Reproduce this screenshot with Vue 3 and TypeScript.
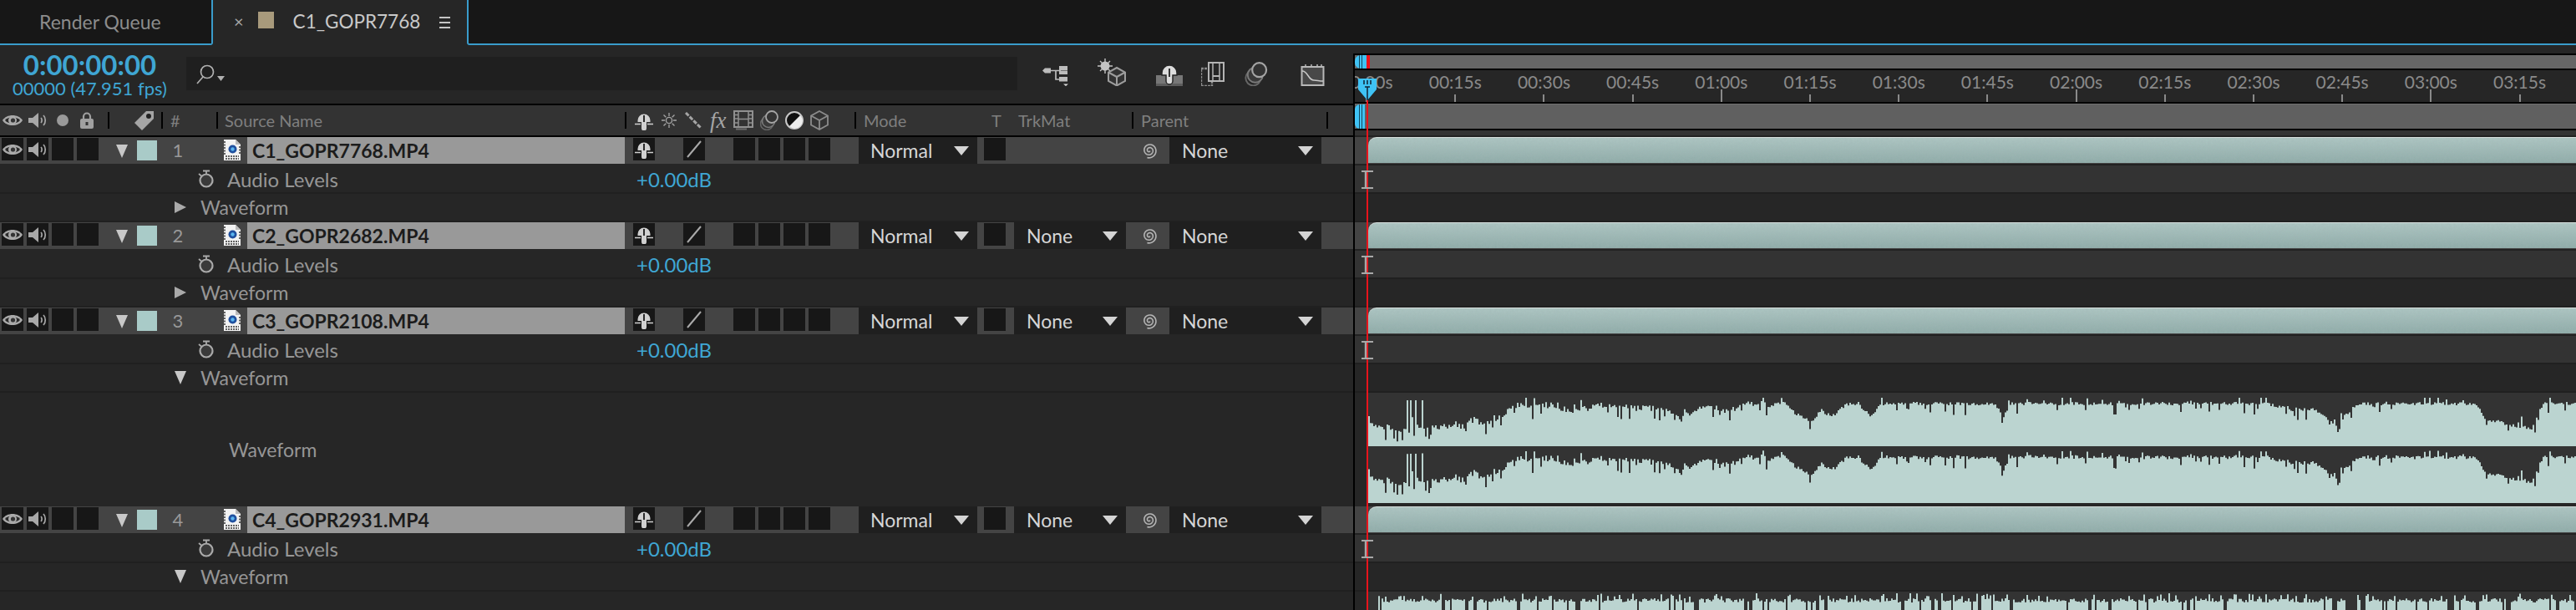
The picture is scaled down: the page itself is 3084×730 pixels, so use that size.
<template>
  <div class="app">
    <!-- icon sprite -->
    <svg class="sprite" aria-hidden="true">
      <symbol id="eye" viewBox="0 0 24 18">
        <path d="M0 9C5 1 19 1 24 9C19 17 5 17 0 9Z" fill="#aaa" />
        <path d="M3 9C7 4 17 4 21 9C17 14 7 14 3 9Z" fill="#2a2a2a" />
        <circle cx="12" cy="9" r="5" fill="#aaa" />
        <circle cx="12.5" cy="9" r="2.6" fill="#333" />
      </symbol>
      <symbol id="speaker" viewBox="0 0 23 20">
        <path d="M0 7H5L12 1V19L5 13H0Z" fill="#a8a8a8" />
        <path d="M15 7C16.5 8.5 16.5 11.5 15 13M18 4C21 7 21 13 18 16" fill="none" stroke="#a8a8a8" stroke-width="1.7" />
      </symbol>
      <symbol id="lock" viewBox="0 0 16 20">
        <path d="M4 8V5.5a4 4 0 0 1 8 0V8" fill="none" stroke="#a0a0a0" stroke-width="2.2" />
        <rect x="0" y="8" width="16" height="12" rx="2" fill="#a0a0a0" />
        <rect x="6.5" y="12" width="3" height="4" fill="#333" />
      </symbol>
      <symbol id="tag" viewBox="0 0 25 25">
        <path d="M1 15L15 1H24V10L10 24Z" fill="#a5a5a5" />
        <circle cx="18" cy="7" r="3" fill="#222" />
      </symbol>
      <symbol id="mask" viewBox="0 0 22 23">
        <path d="M3.5 11a7.5 7.5 0 0 1 15 0V13H14V20.5a3 3 0 0 1-6 0V13H3.5Z" fill="#d0d0d0" />
        <rect x="10" y="5" width="2" height="8" fill="#2a2a2a" />
        <path d="M0 15.5H7M15 15.5H22" stroke="#d0d0d0" stroke-width="1.6" />
      </symbol>
      <symbol id="sun" viewBox="0 0 18 18">
        <circle cx="9" cy="9" r="3.6" fill="none" stroke="#a5a5a5" stroke-width="1.4" />
        <path d="M9 0V4M9 14V18M0 9H4M14 9H18M2.5 2.5L5.3 5.3M12.7 12.7L15.5 15.5M15.5 2.5L12.7 5.3M5.3 12.7L2.5 15.5" stroke="#a5a5a5" stroke-width="1.3" />
      </symbol>
      <symbol id="dashes" viewBox="0 0 20 20">
        <path d="M1 1L19 19" stroke="#a5a5a5" stroke-width="3" stroke-dasharray="5 1.6" />
      </symbol>
      <symbol id="slash" viewBox="0 0 26 27">
        <path d="M5 23L21 4" stroke="#aaa" stroke-width="2" />
      </symbol>
      <symbol id="film" viewBox="0 0 24 24">
        <rect x="1" y="1" width="22" height="19" fill="none" stroke="#909090" stroke-width="2" />
        <path d="M6 1V20M18 1V20M1 5.5H6M1 10H6M1 15H6M18 5.5H23M18 10H23M18 15H23M6 10.5H18" stroke="#909090" stroke-width="1.5" />
        <path d="M3 22.5H16" stroke="#6d6d6d" stroke-width="2" />
      </symbol>
      <symbol id="blur" viewBox="0 0 22 24">
        <ellipse cx="8" cy="16" rx="7.5" ry="7.5" fill="none" stroke="#666" stroke-width="1.6" />
        <ellipse cx="10" cy="13" rx="7.5" ry="7.5" fill="#3a3a3a" stroke="#7a7a7a" stroke-width="1.6" />
        <ellipse cx="14" cy="8" rx="7" ry="7" fill="#333" stroke="#a5a5a5" stroke-width="1.8" />
      </symbol>
      <symbol id="adjust" viewBox="0 0 22 22">
        <circle cx="11" cy="11" r="10" fill="#111" stroke="#c8c8c8" stroke-width="2" />
        <path d="M18 5A9 9 0 0 1 5 18Z" fill="#eee" />
      </symbol>
      <symbol id="cube" viewBox="0 0 22 24">
        <path d="M11 1L21 6.5V17.5L11 23L1 17.5V6.5Z M1 6.5L11 12L21 6.5M11 12V23" fill="none" stroke="#8c8c8c" stroke-width="1.8" />
      </symbol>
      <symbol id="watch" viewBox="0 0 20 22">
        <circle cx="10" cy="13" r="7.5" fill="#3a3a3a" stroke="#aaa" stroke-width="2.2" />
        <path d="M6 1.5H14M10 2V5M1 5L4 7.5" stroke="#aaa" stroke-width="1.8" />
      </symbol>
      <symbol id="spiral" viewBox="0 0 20 20">
        <path :d="spiralPath" fill="none" stroke="#b4b4b4" stroke-width="1.6" />
      </symbol>
      <symbol id="file" viewBox="0 0 20 25">
        <path d="M0 0H14L20 6V25H0Z" fill="#f2f2f2" />
        <path d="M14 0V6H20" fill="#bbb" />
        <circle cx="10.5" cy="11.5" r="5" fill="#1f4f9e" />
        <circle cx="10.5" cy="11.5" r="2.2" fill="#59b4ee" />
        <path d="M2 20H18M2 23H18" stroke="#333" stroke-width="1.5" stroke-dasharray="2 1" />
        <path d="M1 2V18M19 8V18" stroke="#333" stroke-width="1.5" stroke-dasharray="2 1.5" />
      </symbol>
      <symbol id="search" viewBox="0 0 36 24">
        <circle cx="14" cy="9" r="7.5" fill="none" stroke="#b0b0b0" stroke-width="1.7" />
        <path d="M9 15L2 23" stroke="#b0b0b0" stroke-width="1.7" />
        <path d="M26 14H35L30.5 20Z" fill="#b0b0b0" />
      </symbol>
      <symbol id="flow" viewBox="0 0 32 25">
        <path d="M8 6.5H22M16 6.5V17H22" fill="none" stroke="#bcbcbc" stroke-width="1.7" />
        <path d="M0 6.5L3 3.5H10V9.5H3Z" fill="#bcbcbc" />
        <rect x="20" y="1" width="10" height="5.5" fill="#bcbcbc" />
        <rect x="20" y="7" width="10" height="4" fill="#bcbcbc" />
        <rect x="20" y="14" width="10" height="5.5" fill="#bcbcbc" />
        <path d="M25 22.5H31L28 25Z" fill="#ddd" />
      </symbol>
      <symbol id="suncube" viewBox="0 0 34 33">
        <circle cx="9" cy="9" r="5.5" fill="#c4c4c4" />
        <path d="M9 0V18M0 9H18M3 3L15 15M15 3L3 15" stroke="#c4c4c4" stroke-width="1.4" />
        <path d="M23 11L33 16.5V27L23 32.5L13 27V16.5Z" fill="#333" />
        <path d="M23 11L33 16.5V27L23 32.5L13 27V16.5Z M13 16.5L23 22L33 16.5M23 22V32.5" fill="none" stroke="#9d9d9d" stroke-width="2" />
      </symbol>
      <symbol id="draft" viewBox="0 0 32 26">
        <rect x="0" y="13" width="32" height="13" fill="#777" />
        <path d="M0 23H32V26H0Z" fill="#5d5d5d" />
        <path d="M7 10a9 9 0 0 1 18 0V13H20V20a4 4 0 0 1-8 0V13H7Z" fill="#dcdcdc" stroke="#262626" stroke-width="1.5" />
        <rect x="15" y="5" width="2" height="10" fill="#333" />
      </symbol>
      <symbol id="frames" viewBox="0 0 28 29">
        <rect x="0" y="8" width="13" height="21" fill="none" stroke="#8a8a8a" stroke-width="2.4" stroke-dasharray="3 1" />
        <rect x="9" y="1" width="18" height="22" fill="#262626" stroke="#b4b4b4" stroke-width="2" />
        <path d="M14 1V23M22 1V23" stroke="#b4b4b4" stroke-width="1.5" />
        <path d="M14 17H22" stroke="#b4b4b4" stroke-width="2" />
      </symbol>
      <symbol id="graph" viewBox="0 0 29 27">
        <rect x="1.5" y="4" width="26" height="22" fill="#484848" stroke="#b8b8b8" stroke-width="2" />
        <path d="M2 9C9 9 9 20 16 20C20 20 22 21 27 21" fill="none" stroke="#c8c8c8" stroke-width="1.5" />
        <path d="M6 1V4M13 1V4M20 1V4M25 1V4" stroke="#b8b8b8" stroke-width="1.5" />
      </symbol>
      <symbol id="down" viewBox="0 0 14 16">
        <path d="M0 0H14L7 16Z" fill="#c8c8c8" />
      </symbol>
      <symbol id="right" viewBox="0 0 14 14">
        <path d="M0 0L14 7L0 14Z" fill="#aaa" />
      </symbol>
      <symbol id="menu-arrow" viewBox="0 0 18 11">
        <path d="M0 0H18L9 11Z" fill="#d4d4d4" />
      </symbol>
    </svg>

    <header class="tabs">
      <div class="tab-off">Render Queue</div>
      <div class="tab-on">
        <span class="tab-x">×</span>
        <span class="tab-swatch"></span>
        <span class="tab-title">C1_GOPR7768</span>
        <span class="tab-menu"><i></i><i></i><i></i></span>
      </div>
      <div class="tab-rest"></div>
    </header>

    <div class="main">
      <section class="left">
        <div class="toolbar">
          <div class="clock">
            <div class="timecode">0:00:00:00</div>
            <div class="fps">00000 (47.951 fps)</div>
          </div>
          <div class="search">
            <svg class="search-icon"><use href="#search" /></svg>
          </div>
          <div class="tools">
            <svg class="t-flow"><use href="#flow" /></svg>
            <svg class="t-sun"><use href="#suncube" /></svg>
            <svg class="t-draft"><use href="#draft" /></svg>
            <svg class="t-tall"><use href="#frames" /></svg>
            <svg class="t-tall"><use href="#blur" /></svg>
            <svg class="t-graph"><use href="#graph" /></svg>
          </div>
        </div>

        <div class="head">
          <div class="h-av">
            <svg class="h-eye"><use href="#eye" /></svg>
            <svg class="h-spk"><use href="#speaker" /></svg>
            <span class="h-dot"></span>
            <svg class="h-lock"><use href="#lock" /></svg>
          </div>
          <span class="sep"></span>
          <div class="h-label"><svg class="h-tag"><use href="#tag" /></svg></div>
          <span class="sep"></span>
          <div class="h-num">#</div>
          <span class="sep"></span>
          <div class="h-src">Source Name</div>
          <span class="sep"></span>
          <div class="h-sw">
            <svg class="sw-mask"><use href="#mask" /></svg>
            <svg class="sw-sun"><use href="#sun" /></svg>
            <svg class="sw-dash"><use href="#dashes" /></svg>
            <span class="sw-fx">fx</span>
            <svg class="sw-film"><use href="#film" /></svg>
            <svg class="sw-icon"><use href="#blur" /></svg>
            <svg class="sw-icon"><use href="#adjust" /></svg>
            <svg class="sw-icon"><use href="#cube" /></svg>
          </div>
          <span class="sep"></span>
          <div class="h-mode">Mode</div>
          <div class="h-t">T</div>
          <div class="h-trk">TrkMat</div>
          <span class="sep"></span>
          <div class="h-parent">Parent</div>
          <span class="sep"></span>
        </div>

        <template v-for="layer in layers" :key="layer.n">
          <div class="layer">
            <div class="av">
              <span class="box"><svg class="box-eye"><use href="#eye" /></svg></span>
              <span class="box"><svg class="box-spk"><use href="#speaker" /></svg></span>
              <span class="box"></span>
              <span class="box"></span>
            </div>
            <div class="twirl"><svg><use href="#down" /></svg></div>
            <span class="swatch"></span>
            <div class="num">{{ layer.n }}</div>
            <div class="file"><svg><use href="#file" /></svg></div>
            <div class="name">{{ layer.name }}</div>
            <div class="switches">
              <span class="box"><svg class="box-mask"><use href="#mask" /></svg></span>
              <span class="box slash-box"><svg class="box-slash"><use href="#slash" /></svg></span>
              <span class="box slash-box"></span>
              <span class="box"></span>
              <span class="box"></span>
              <span class="box"></span>
            </div>
            <div class="mode">Normal <svg><use href="#menu-arrow" /></svg></div>
            <div class="trk">
              <span class="box"></span>
              <div class="trk-drop" :class="{ empty: !layer.matte }">
                <template v-if="layer.matte">None <svg><use href="#menu-arrow" /></svg></template>
              </div>
              <svg class="spiral"><use href="#spiral" /></svg>
            </div>
            <div class="parent">None <svg><use href="#menu-arrow" /></svg></div>
            <div class="layer-end"></div>
          </div>
          <div class="sub">
            <svg class="watch"><use href="#watch" /></svg>
            <span class="sub-name">Audio Levels</span>
            <span class="db">+0.00dB</span>
          </div>
          <div class="sub">
            <svg class="twirl-sub" :class="{ open: layer.open }"><use :href="layer.open ? '#down' : '#right'" /></svg>
            <span class="wave-name">Waveform</span>
          </div>
          <div v-if="layer.n === 3" class="wave-label">Waveform</div>
        </template>
      </section>

      <section class="right">
        <div class="timeline">
          <div class="nav">
            <span class="nav-handle"></span>
            <span class="nav-red"></span>
          </div>
          <div class="ruler">
            <div v-for="(t, i) in ticks" :key="t" class="tick-cell">
              <span class="tick-label">{{ t }}</span>
              <span class="tick" :class="{ major: i % 4 === 0 }"></span>
            </div>
          </div>
          <div class="work"><span class="work-handle"></span></div>
          <div class="work-gap"></div>

          <template v-for="layer in layers" :key="layer.n">
            <div class="track">
              <div class="clip">
                <svg class="noise">
                  <filter :id="`grain${layer.n}`">
                    <feTurbulence type="fractalNoise" baseFrequency="0.35" numOctaves="2" :seed="layer.n" />
                    <feColorMatrix values="0 0 0 0 0.35  0 0 0 0 0.47  0 0 0 0 0.46  0.9 0 0 0 -0.2" />
                  </filter>
                  <rect width="100%" height="100%" :filter="`url(#grain${layer.n})`" />
                </svg>
              </div>
            </div>
            <div class="track-sub">
              <svg class="caret" viewBox="0 0 14 22">
                <path d="M0 1H14M0 21H14" stroke="#a8a8a8" stroke-width="2" fill="none" />
                <path d="M5 1V21" stroke="#a8a8a8" stroke-width="2.4" fill="none" />
              </svg>
            </div>
            <div class="track-empty"></div>
            <div v-if="layer.open" class="track-wave">
              <svg class="wave" width="1446" height="132">
                <rect y="0" width="1446" height="132" fill="#333" />
                <path :d="waves[layer.n]" fill="#bbd4d0" />
              </svg>
            </div>
          </template>

          <span class="red-line"></span>
          <svg class="playhead" viewBox="0 0 22 26">
            <path d="M0 0H22V13L11 26L0 13Z" fill="#3fc3f5" />
            <path d="M7 2V7M11 2V7M15 2V7M8 10H14M11 10V26" stroke="#123" stroke-width="1.5" />
          </svg>
        </div>
      </section>
    </div>
  </div>
</template>

<script setup lang="ts">
  type Layer = { n: number, name: string, matte: boolean, open: boolean }

  const layers: Layer[] = [
    { n: 1, name: 'C1_GOPR7768.MP4', matte: false, open: false },
    { n: 2, name: 'C2_GOPR2682.MP4', matte: true, open: false },
    { n: 3, name: 'C3_GOPR2108.MP4', matte: true, open: true },
    { n: 4, name: 'C4_GOPR2931.MP4', matte: true, open: true },
  ]

  const ticks = Array.from({ length: 14 }, (_, i) => {
    const total = i * 15
    const m = Math.floor(total / 60)
    const s = total % 60
    return `${String(m).padStart(2, '0')}:${String(s).padStart(2, '0')}s`
  })

  // pick whip: two and a bit turns, opening at the top right
  const spiralPath = Array.from({ length: 70 }, (_, i) => {
    const t = i / 69
    const a = t * Math.PI * 4.4 + 0.6
    const r = 1 + t * 8
    const x = 10 + r * Math.cos(a)
    const y = 10 + r * Math.sin(a)
    return `${i ? 'L' : 'M'}${x.toFixed(2)} ${y.toFixed(2)}`
  }).join('')

  /* ===== waveform ===== */
  // [x, depth] read off the reference: how far the wave top sits under the channel top
  const envelope: [number, number][] = [
    [0, 27], [4, 40], [20, 38], [38, 43], [47, 37], [69, 38], [114, 38], [123, 30], [141, 35],
    [158, 27], [172, 12], [212, 12], [230, 20], [252, 17], [274, 12], [355, 17], [373, 27],
    [408, 12], [431, 20], [453, 10], [498, 12], [512, 25], [530, 33], [542, 20], [554, 28],
    [572, 12], [589, 15], [601, 28], [613, 12], [750, 12], [759, 30], [768, 12], [1072, 12],
    [1108, 20], [1131, 18], [1143, 28], [1158, 38], [1173, 22], [1185, 12], [1316, 12],
    [1328, 15], [1337, 30], [1370, 38], [1393, 42], [1402, 18], [1408, 12], [1446, 12],
  ]

  function rng (seed: number) {
    let s = seed
    return () => {
      s = (s * 1664525 + 1013904223) % 4294967296
      return s / 4294967296
    }
  }

  function depthAt (x: number) {
    for (let i = 1; i < envelope.length; i++) {
      const [x1, d1] = envelope[i]
      if (x <= x1) {
        const [x0, d0] = envelope[i - 1]
        return d0 + (d1 - d0) * (x - x0) / (x1 - x0)
      }
    }
    return 12
  }

  function channelDepths () {
    const rand = rng(77)
    const out: number[] = []
    for (let x = 0; x < 1446; x += 2) {
      const early = x < 500
      let d = depthAt(x) + rand() * (early ? 7 : 4) - 1
      const r = rand()
      if (r < (early ? 0.16 : 0.09)) d += 4 + rand() * (early ? 12 : 9)
      else if (r < (early ? 0.22 : 0.14)) d -= 3 + rand() * 8
      if (Math.abs(x - 893) < 2 || Math.abs(x - 1060) < 2) d = 26
      if (Math.abs(x - 758) < 2) d = 36
      if (x === 46 || x === 50 || x === 56 || x === 64) d = 9
      out.push(Math.max(d, 6))
    }
    return out
  }

  function channelPath (depths: number[], top: number, bottom: number, jitter: number) {
    const rand = rng(5)
    let d = `M0 ${bottom}`
    depths.forEach((v, i) => {
      const y = top + v + (rand() - 0.5) * jitter
      d += `V${y.toFixed(1)}H${(i + 1) * 2}`
    })
    return `${d}V${bottom}Z`
  }

  function stripPath () {
    const rand = rng(31)
    let d = 'M12 132'
    let gap = false
    for (let x = 12; x < 1446; x += 2) {
      const r = rand()
      gap = gap ? r < 0.4 : r < 0.12
      let y = 8 + rand() * 5
      if (gap) y = 24
      else if (rand() < 0.12) y = 2 + rand() * 4
      d += `V${y.toFixed(1)}H${x + 2}`
    }
    return `${d}V132Z`
  }

  const depths = channelDepths()
  const waves: Record<number, string> = {
    3: channelPath(depths, 0, 64, 0) + channelPath(depths, 64, 132, 1.5),
    4: stripPath(),
  }
</script>

<style scoped>
.app {
  width: 3084px;
  height: 730px;
  overflow: hidden;
  background: #262626;
  font-family: Lato, "Noto Sans", sans-serif;
  font-size: 23px;
  color: #969696;
}

.sprite {
  display: none;
}

svg {
  display: block;
  flex: none;
}

/* ===== tabs ===== */
.tabs {
  display: flex;
  height: 54px;
  background: #171717;
}

.tab-off {
  box-sizing: border-box;
  width: 255px;
  padding: 12px 0 0 47px;
  border-right: 2px solid #3a9ccb;
  border-bottom: 2px solid #3a9ccb;
  border-bottom-right-radius: 3px;
  color: #8c8c8c;
  font-size: 23px;
}

.tab-on {
  display: flex;
  align-items: flex-start;
  width: 304px;
  background: #262626;
}

.tab-x {
  margin: 15px 0 0 25px;
  color: #a5a5a5;
  font-size: 20px;
  line-height: 20px;
}

.tab-swatch {
  width: 19px;
  height: 20px;
  margin: 14px 0 0 17px;
  background: #a89a7c;
}

.tab-title {
  margin: 12px 0 0 23px;
  color: #c9c9c9;
  font-size: 22.5px;
}

.tab-menu {
  display: flex;
  flex-direction: column;
  gap: 4px;
  width: 13px;
  margin: 20px 0 0 23px;
}

.tab-menu i {
  height: 2px;
  background: #c4c4c4;
}

.tab-rest {
  flex: 1;
  border-left: 2px solid #3a9ccb;
  border-bottom: 2px solid #3a9ccb;
  border-bottom-left-radius: 3px;
}

/* ===== layout ===== */
.main {
  display: flex;
}

.left {
  flex: none;
  width: 1620px;
}

.right {
  flex: 1;
  min-width: 0;
  padding-top: 10px;
}

.timeline {
  position: relative;
  height: 666px;
  overflow: hidden;
  border-left: 2px solid #000;
}

/* ===== toolbar ===== */
.toolbar {
  display: flex;
  height: 70px;
}

.clock {
  flex: none;
  width: 215px;
  margin-right: 8px;
  color: #3fa6d4;
  text-align: center;
}

.timecode {
  margin-top: 6px;
  font-size: 33px;
  font-weight: 700;
  line-height: 34px;
}

.fps {
  font-size: 22px;
  line-height: 24px;
}

.search {
  flex: none;
  width: 995px;
  height: 40px;
  margin-top: 14px;
  background: #1f1f1f;
}

.search-icon {
  width: 36px;
  height: 24px;
  margin: 9px 0 0 11px;
}

.tools {
  display: grid;
  grid-template-columns: 66px 70px 54px 52px 67px 29px;
  align-items: end;
  height: 33px;
  margin: 16px 0 0 30px;
}

.t-flow {
  width: 32px;
  height: 25px;
}

.t-sun {
  width: 34px;
  height: 33px;
}

.t-draft {
  width: 32px;
  height: 26px;
}

.t-tall {
  width: 28px;
  height: 29px;
}

.t-graph {
  width: 29px;
  height: 27px;
}

/* ===== column heads ===== */
.head {
  display: flex;
  align-items: center;
  box-sizing: border-box;
  height: 40px;
  border-top: 2px solid #000;
  border-bottom: 2px solid #000;
  background: #333;
  color: #7f7f7f;
  font-size: 20px;
}

.sep {
  flex: none;
  width: 2px;
  height: 20px;
  background: #000;
}

.h-av {
  display: flex;
  align-items: center;
  box-sizing: border-box;
  width: 129px;
  padding-left: 3px;
}

.h-eye {
  width: 24px;
  height: 18px;
}

.h-spk {
  width: 23px;
  height: 20px;
  margin-left: 7px;
}

.h-dot {
  width: 14px;
  height: 14px;
  margin-left: 11px;
  border-radius: 50%;
  background: #9a9a9a;
}

.h-lock {
  width: 16px;
  height: 20px;
  margin-left: 14px;
}

.h-label {
  box-sizing: border-box;
  width: 62px;
  padding-left: 29px;
}

.h-tag {
  width: 25px;
  height: 25px;
}

.h-num {
  box-sizing: border-box;
  width: 64px;
  padding-left: 9px;
}

.h-src {
  box-sizing: border-box;
  width: 487px;
  padding-left: 8px;
}

.h-sw {
  display: flex;
  align-items: center;
  gap: 8px;
  box-sizing: border-box;
  width: 273px;
  padding-left: 10px;
}

.sw-mask {
  width: 22px;
  height: 23px;
}

.sw-sun {
  width: 18px;
  height: 18px;
  margin-left: 2px;
}

.sw-dash {
  width: 20px;
  height: 20px;
  margin-left: 2px;
}

.sw-fx {
  width: 22px;
  margin-left: 2px;
  color: #a5a5a5;
  font-family: "Liberation Serif", serif;
  font-size: 27px;
  font-style: italic;
  line-height: 24px;
}

.sw-film {
  width: 24px;
  height: 24px;
  margin-left: -2px;
}

.sw-icon {
  width: 22px;
  height: 24px;
}

.h-mode {
  box-sizing: border-box;
  width: 162px;
  padding-left: 9px;
}

.h-t {
  width: 32px;
}

.h-trk {
  width: 136px;
}

.h-parent {
  box-sizing: border-box;
  width: 231px;
  padding-left: 9px;
}

/* ===== layer rows ===== */
.layer {
  display: flex;
  height: 32px;
  margin-bottom: 2px;
  background: #444;
}

.box {
  display: flex;
  align-items: center;
  justify-content: center;
  flex: none;
  width: 26px;
  height: 27px;
  margin-top: 1px;
  background: #171717;
}

.av {
  display: flex;
  gap: 4px;
  box-sizing: border-box;
  width: 124px;
  padding-left: 2px;
}

.box-eye {
  width: 24px;
  height: 18px;
}

.box-spk {
  width: 23px;
  height: 20px;
}

.twirl {
  box-sizing: border-box;
  width: 40px;
  padding: 9px 0 0 15px;
}

.twirl svg {
  width: 14px;
  height: 16px;
}

.swatch {
  flex: none;
  width: 24px;
  height: 24px;
  margin-top: 4px;
  background: #a9cbc8;
}

.num {
  width: 50px;
  color: #999;
  font-size: 22px;
  line-height: 32px;
  text-align: center;
}

.file {
  box-sizing: border-box;
  width: 58px;
  padding: 3px 0 0 30px;
}

.file svg {
  width: 20px;
  height: 25px;
}

.name {
  box-sizing: border-box;
  width: 452px;
  padding-left: 6px;
  background: #999;
  color: #1c1c1c;
  font-size: 23px;
  font-weight: 700;
  line-height: 32px;
}

.switches {
  display: flex;
  gap: 4px;
  box-sizing: border-box;
  width: 280px;
  padding-left: 10px;
}

.slash-box {
  margin-left: 30px;
}

.box-mask {
  width: 22px;
  height: 23px;
}

.box-slash {
  width: 26px;
  height: 27px;
}

.mode,
.parent,
.trk-drop {
  display: flex;
  align-items: center;
  justify-content: space-between;
  box-sizing: border-box;
  background: #1f1f1f;
  color: #d6d6d6;
  font-size: 23px;
}

.mode svg,
.parent svg,
.trk-drop svg {
  width: 18px;
  height: 11px;
}

.mode {
  width: 142px;
  padding: 0 10px 0 14px;
}

.trk {
  display: flex;
  box-sizing: border-box;
  width: 230px;
  padding-left: 8px;
}

.trk-drop {
  width: 134px;
  margin-left: 10px;
  padding: 0 10px 0 15px;
}

.trk-drop.empty {
  background: transparent;
}

.spiral {
  width: 20px;
  height: 20px;
  margin: 6px 0 0 18px;
}

.parent {
  width: 182px;
  padding: 0 10px 0 15px;
}

.layer-end {
  flex: 1;
}

/* ===== property rows ===== */
.sub {
  display: flex;
  align-items: center;
  box-sizing: border-box;
  height: 34px;
  border-bottom: 2px solid #202020;
}

.watch {
  flex: none;
  width: 20px;
  height: 22px;
  margin-left: 237px;
}

.sub-name {
  width: 490px;
  margin-left: 15px;
  font-size: 24px;
}

.db {
  color: #3fa6d4;
  font-size: 24px;
}

.twirl-sub {
  width: 14px;
  height: 14px;
  margin-left: 209px;
}

.twirl-sub.open {
  height: 16px;
}

.wave-name {
  margin-left: 17px;
}

.wave-label {
  height: 136px;
  padding-left: 274px;
  line-height: 136px;
}

/* ===== timeline ===== */
.nav {
  display: flex;
  box-sizing: border-box;
  height: 20px;
  border-top: 2px solid #000;
  border-bottom: 2px solid #000;
  background: #666;
}

.nav-handle {
  width: 14px;
  border-radius: 7px 0 0 7px;
  background: linear-gradient(90deg, #3fc3f5 5px, #14465c 5px, #14465c 6px, #3fc3f5 6px, #3fc3f5 8px, #14465c 8px, #14465c 9px, #3fc3f5 9px);
}

.nav-red {
  width: 4px;
  background: #e8141c;
}

.ruler {
  display: flex;
  box-sizing: border-box;
  height: 40px;
  margin-left: -39px;
  border-bottom: 2px solid #000;
}

.tick-cell {
  display: flex;
  flex: none;
  flex-direction: column;
  align-items: center;
  justify-content: space-between;
  width: 106.2px;
  height: 38px;
}

.tick-label {
  color: #8a8a8a;
  font-size: 21px;
  line-height: 24px;
  margin-top: 2px;
}

.tick {
  width: 2px;
  height: 9px;
  background: #8a8a8a;
}

.tick.major {
  height: 15px;
  margin-top: -6px;
}

.work {
  box-sizing: border-box;
  height: 32px;
  border-top: 1px solid #707070;
  border-bottom: 2px solid #000;
  background: #606060;
}

.work-handle {
  display: block;
  width: 12px;
  height: 29px;
  border-radius: 6px 0 0 6px;
  background: linear-gradient(90deg, #3fc3f5 5px, #14465c 5px, #14465c 6px, #3fc3f5 6px, #3fc3f5 8px, #14465c 8px, #14465c 9px, #3fc3f5 9px);
}

.work-gap {
  height: 8px;
  border-bottom: 2px solid #222;
  box-sizing: border-box;
  background: #333;
}

.track {
  box-sizing: border-box;
  height: 34px;
  padding: 0 0 3px 16px;
  background: linear-gradient(#444 32px, #222 32px);
}

.clip {
  position: relative;
  height: 31px;
  overflow: hidden;
  border-top: 1px solid #d6dedc;
  box-sizing: border-box;
  border-top-left-radius: 10px;
  background: linear-gradient(#aec6c3, #8fabA8);
}

.noise {
  position: absolute;
  inset: 0;
  width: 100%;
  height: 100%;
  opacity: 0.6;
}

.track-sub {
  box-sizing: border-box;
  height: 34px;
  padding: 6px 0 0 8px;
  border-bottom: 2px solid #202020;
  background: #333;
}

.caret {
  position: relative;
  z-index: 1;
  width: 14px;
  height: 22px;
}

.track-empty {
  box-sizing: border-box;
  height: 34px;
  border-bottom: 2px solid #202020;
}

.track-wave {
  box-sizing: border-box;
  height: 136px;
  padding-left: 16px;
}

.red-line {
  position: absolute;
  top: 56px;
  bottom: 0;
  left: 14px;
  width: 2px;
  background: #e8141c;
}

.playhead {
  position: absolute;
  top: 30px;
  left: 4px;
  width: 22px;
  height: 26px;
}
</style>
